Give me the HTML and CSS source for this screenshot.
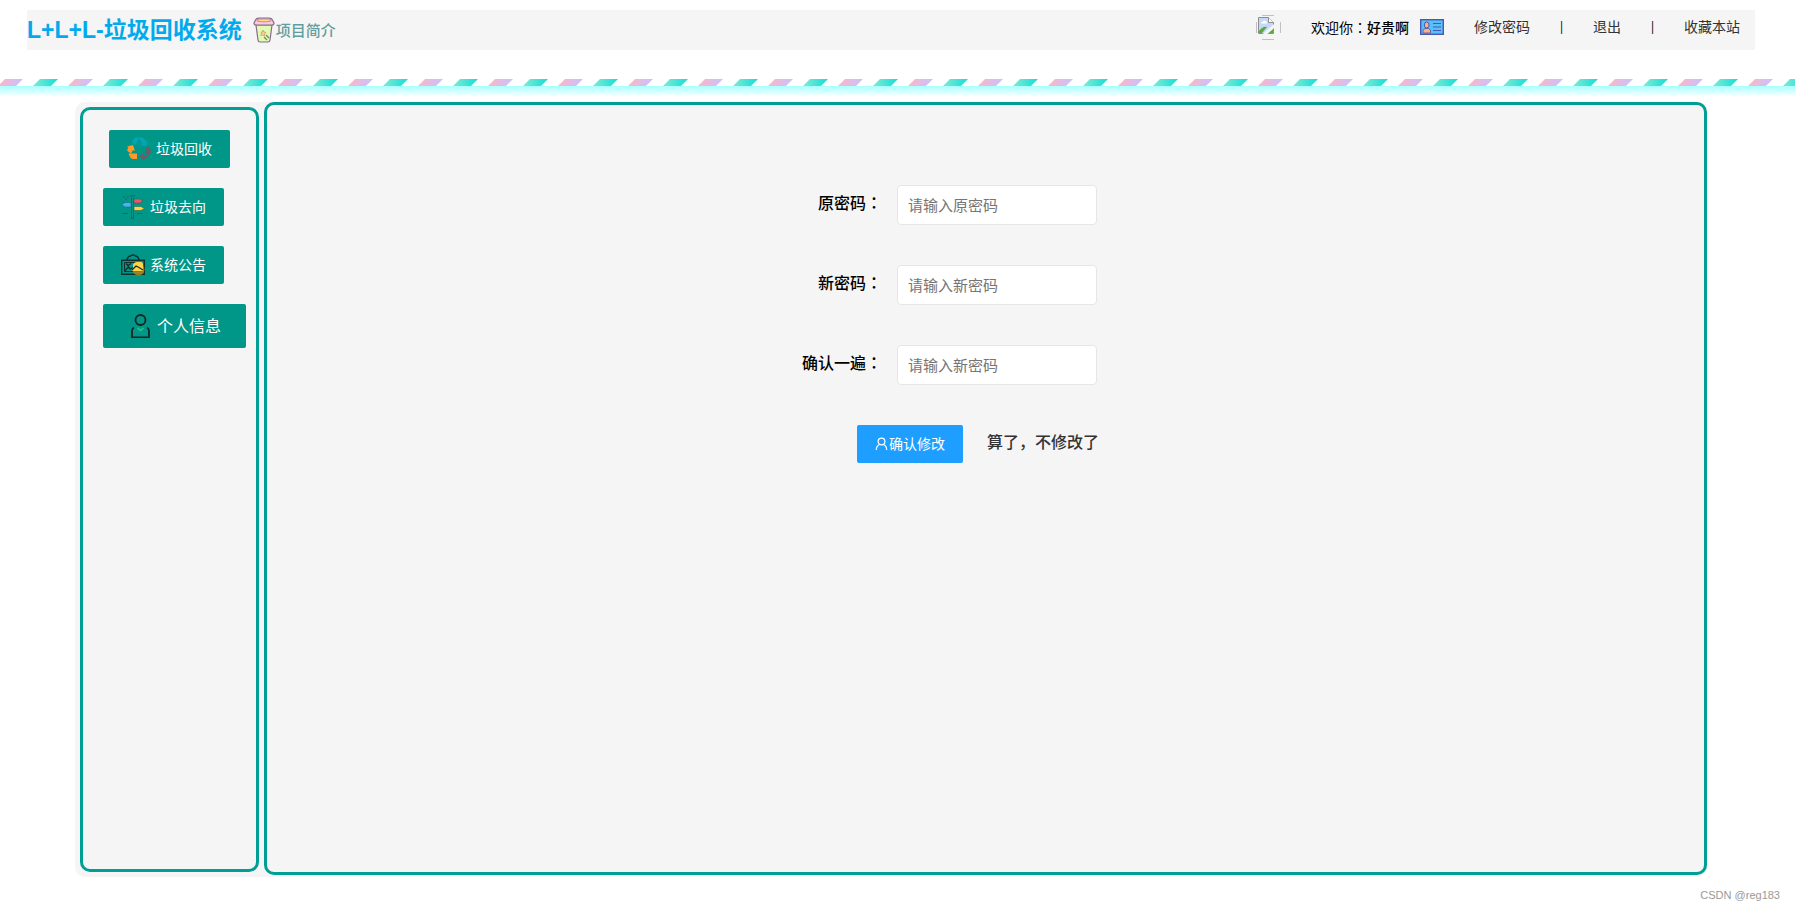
FILE: index.html
```html
<!DOCTYPE html>
<html lang="zh-CN">
<head>
<meta charset="utf-8">
<title>垃圾回收系统</title>
<link rel="stylesheet" href="styles.css">
</head>
<body>
<header class="topbar">
  <h1 class="brand">L+L+L-垃圾回收系统</h1>
  <a class="intro" href="#">
    <svg class="cup" viewBox="0 0 24 28" aria-hidden="true">
      <path d="M4 9h16l-2 15q-.3 2-2 2H8q-1.700 0-2-2z" fill="#e0fbb4" stroke="#8a6a8c" stroke-width="1.200"/>
      <path d="M3 5q1-3 4-3h10q3 0 4 3l1 2q0 2-2 2H4Q2 9 2 7z" fill="#fbc9dc" stroke="#8a6a8c" stroke-width="1.200"/>
      <path d="M6 3h12l1 2q-7 2-14 0z" fill="#ffd98c" stroke="#8a6a8c" stroke-width=".6"/>
      <path d="m11 14 1 2 2 .5-1.500 1.500.2 2-2-1-2 .6.8-2L9 16h1.500z" fill="#fbd08a" stroke="#c98a5a" stroke-width=".6"/>
      <path d="m14 19 3 3M12 21l3 3" stroke="#6f8a6a" stroke-width="1.300" fill="none"/>
    </svg>
    <span>项目简介</span>
  </a>
  <nav class="user">
    <svg class="avatar" viewBox="0 0 25 25" role="img" aria-label="头像">
      <path d="M6 .5h12M6 24.500h12M.5 7v11M24.500 7v11" fill="none" stroke="#c0c0c0"/>
      <g transform="translate(2 2)">
        <path d="M.5.5h10l5 5v11H.5z" fill="#c3d9f8" stroke="#8f8f8f"/>
        <path d="M10.500.5v5h5" fill="#fff" stroke="#8f8f8f"/>
        <path d="M3 6.500q0-2 2-2 1-2 3 0 1 0 1 2z" fill="#fff"/>
        <path d="M1 16v-2q4-5 8-4l-5 6z" fill="#5aab3c"/>
        <path d="M10 16l5-4v4z" fill="#5aab3c"/>
        <path d="M4 17.500 16 7v4l-7 6.500z" fill="#f5f5f5"/>
      </g>
    </svg>
    <span class="welcome">欢迎你<span class="mark" lang="zh-TW">：</span><b>好贵啊</b></span>
    <svg class="card" viewBox="0 0 24 16" aria-hidden="true">
      <rect x=".7" y=".7" width="22.600" height="14.600" fill="#55c0fa" stroke="#4a58b0" stroke-width="1.400"/>
      <path d="M3 14V11l2-1.500h3.500L10.500 11v3z" fill="#fbb27e" stroke="#4a58b0" stroke-width=".8"/>
      <ellipse cx="6.700" cy="6" rx="2.400" ry="3" fill="#fbb27e" stroke="#4a58b0"/>
      <path d="M13 4.500h8M13 8h8M13 11.500h8" stroke="#4a58b0" stroke-width="1.200"/>
    </svg>
    <a class="first" href="#">修改密码</a><i>|</i><a href="#">退出</a><i>|</i><a href="#">收藏本站</a>
  </nav>
</header>
<svg class="stripes" aria-hidden="true">
  <defs>
    <linearGradient id="pink"><stop stop-color="#ffb5c3"/><stop offset="1" stop-color="#c6c2ff"/></linearGradient>
    <linearGradient id="teal"><stop stop-color="#80ead2"/><stop offset="1" stop-color="#14ddd8"/></linearGradient>
    <pattern id="tape" x="-2" width="70" height="7" patternUnits="userSpaceOnUse">
      <path d="M0 7 7 0h18l-7 7z" fill="url(#pink)"/>
      <path d="M35 7l7-7h18l-7 7z" fill="url(#teal)"/>
    </pattern>
  </defs>
  <rect width="100%" height="7" fill="url(#tape)"/>
</svg>
<div class="glow"></div>
<div class="panel">
  <aside class="side">
    <button class="item lead" type="button">
      <svg viewBox="0 0 24 24" aria-hidden="true">
        <path d="M4.500 5.500 7 1.500Q7.800.5 9 .5h3.500L8.500 8zM11.500.5H15q1.500 0 2.500 1.500L19 4.500l2-1-2 6-6-1.500 2-1z" fill="#00a5b8"/>
        <path d="M0 9.500 6 8l2 6-2-1-2 3.500L.5 14Q0 13 .5 12l1-1.500zM1.500 16.500H10V22H6q-2 0-3-2z" fill="#ff9a28"/>
        <path d="m18.500 11.500 3.500-2 1.500 3q1 2 0 3.500L22 18.500l-4.500-2.500 2-2.500zM12.500 19.500l4-4v2.500h5l-2 3q-.8 1-2 1h-1v2z" fill="#666069"/>
      </svg>垃圾回收
    </button>
    <button class="item" type="button">
      <svg viewBox="0 0 24 24" aria-hidden="true">
        <path d="M9.500.5h4l-1 2v21h-2v-21zM3 1v2M5 3v2M7 1v2M1 18.500h6M16 18.500h6" fill="none" stroke="#176b68"/>
        <path d="M13 4h6l3 2-3 2h-6z" fill="#ff4f5e" stroke="#176b68" stroke-width=".6"/>
        <path d="M10 7.500H4L.5 9.700 4 12h6z" fill="#45b5f5" stroke="#176b68" stroke-width=".6"/>
        <path d="M13 11.500h7l3.500 2-3.500 2h-7z" fill="#ffd03c" stroke="#176b68" stroke-width=".6"/>
      </svg>垃圾去向
    </button>
    <button class="item" type="button">
      <svg viewBox="0 0 24 24" aria-hidden="true">
        <g fill="none" stroke="#12302d"><path d="M.7 7.200h22.600v14H.7z" stroke-width="1.400"/><path d="M3.500 9.500h17v9h-17z"/><path d="M6 7Q7 3 9.500 3q2.500-2 5 0Q17 3 18 7M5 10.500l2 2 3-2M3.500 18l4-4 2 2 3-2" stroke-width="1.400"/></g>
        <circle cx="17.500" cy="16.500" r="6" fill="#b58418" opacity=".85"/>
        <path d="M12 16v-4q1-3 4-3h4q2 0 2 3v6H11z" fill="#ffd447"/>
        <path d="m11 17 4-4 3 1.500 4 2.500" fill="none" stroke="#12302d" stroke-width="1.300"/>
      </svg>系统公告
    </button>
    <button class="item large" type="button">
      <svg viewBox="0 0 24 24" fill="none" stroke="#1b2423" stroke-width="1.800" aria-hidden="true">
        <circle cx="12.500" cy="6" r="5"/><path d="M6 13.500q-2 1-2 3.500v6.500h17V17q0-2.500-2-3.500"/><path d="m9.500 14 3 2.500 3-2.500" stroke="#16c77a"/>
      </svg>个人信息
    </button>
  </aside>
  <main class="main">
    <form class="form">
      <label for="old">原密码<span class="mark" lang="zh-TW">：</span></label>
      <input id="old" type="password" placeholder="请输入原密码">
      <label for="new">新密码<span class="mark" lang="zh-TW">：</span></label>
      <input id="new" type="password" placeholder="请输入新密码">
      <label for="again">确认一遍<span class="mark" lang="zh-TW">：</span></label>
      <input id="again" type="password" placeholder="请输入新密码">
      <div class="actions">
        <button class="submit" type="button">
          <svg viewBox="0 0 12 14" fill="none" stroke="#fff" stroke-width="1.200" aria-hidden="true"><circle cx="6" cy="4.500" r="3.400"/><path d="M.8 13q0-4 3.200-5.500M11.200 13q0-4-3.200-5.500"/></svg>确认修改
        </button>
        <a href="#">算了，不修改了</a>
      </div>
    </form>
  </main>
</div>
<footer class="credit">CSDN @reg183</footer>
</body>
</html>
```
FILE: styles.css
```css
* { box-sizing: border-box; }
body {
  margin: 0;
  min-height: 100vh;
  display: flex;
  flex-direction: column;
  background: #fff;
  color: #000;
  font: 14px/20px "Open Sans", "Noto Sans CJK SC", sans-serif;
}
a { color: #333; text-decoration: none; }
b { font-weight: 500; }
button, input { font-family: inherit; }
.mark { font-family: "Noto Sans CJK TC", sans-serif; }

.topbar {
  display: flex;
  align-items: center;
  height: 40px;
  margin: 10px 40px 29px 27px;
  background: #f5f5f5;
}
.brand {
  margin: 0;
  font-family: "Liberation Sans", "Noto Sans CJK SC", sans-serif;
  font-size: 23px;
  line-height: 40px;
  font-weight: 700;
  color: #01aaed;
}
.intro {
  display: flex;
  align-items: center;
  margin-left: 10px;
  font-size: 15px;
  font-weight: 500;
  color: #5f9ea0;
}
.cup { width: 24px; height: 28px; }
.user {
  display: flex;
  align-items: center;
  margin-left: auto;
  padding: 0 15px 6px 0;
}
.user i { width: 63px; text-align: center; font-style: normal; font-size: 12px; }
.avatar { width: 25px; height: 25px; }
.welcome { margin-left: 30px; }
.card { width: 24px; height: 16px; margin-left: 11px; }
.first { margin-left: 30px; }

.stripes { display: block; width: 100%; height: 7px; }
.glow { height: 11px; background: linear-gradient(#a8ffff, #fff); }

.panel {
  flex: 1;
  display: flex;
  gap: 5px;
  margin: 5px 88px 0 75px;
  padding-bottom: 2px;
  border-radius: 10px;
  background: #f5f5f5;
}
.side, .main { border: 3px solid #009f95; border-radius: 10px; }
.side {
  display: flex;
  flex-direction: column;
  align-items: flex-start;
  gap: 20px;
  width: 179px;
  margin: 5px 0 3px 5px;
  padding: 20px;
}
.item {
  display: flex;
  align-items: center;
  flex-shrink: 0;
  gap: 5px;
  height: 38px;
  padding: 0 18px;
  border: 0;
  border-radius: 2px;
  background: #009688;
  color: #fff;
  font-size: 14px;
  line-height: 20px;
  white-space: nowrap;
}
.item svg { width: 24px; height: 24px; }
.lead { margin-left: 6px; }
.large { height: 44px; padding: 0 25px; font-size: 16px; }

.main {
  flex: 1;
  display: flex;
  justify-content: center;
  align-items: flex-start;
  padding: 80px 72px 0 0;
}
.form {
  display: grid;
  grid-template-columns: 80px 200px;
  gap: 40px 15px;
  font-size: 16px;
  font-weight: 500;
}
.form label {
  line-height: 34px;
  text-align: right;
  white-space: nowrap;
}
.form input {
  height: 40px;
  padding: 0 10px;
  border: 1px solid #e6e6e6;
  border-radius: 4px;
  background: #fff;
  font-size: 15px;
}
.form input::placeholder { color: #757575; }
.actions {
  grid-column: 1 / -1;
  display: flex;
  gap: 24px;
  padding-left: 55px;
  line-height: 34px;
  white-space: nowrap;
}
.submit {
  display: flex;
  align-items: center;
  gap: 1px;
  height: 38px;
  padding: 0 18px;
  border: 0;
  border-radius: 2px;
  background: #1e9fff;
  color: #fff;
  font-size: 14px;
  line-height: 20px;
}
.submit svg { width: 13px; height: 14px; }

.credit {
  height: 34px;
  padding-right: 15px;
  text-align: right;
  font: 11px/36px "Liberation Sans", sans-serif;
  color: #999;
}
```
